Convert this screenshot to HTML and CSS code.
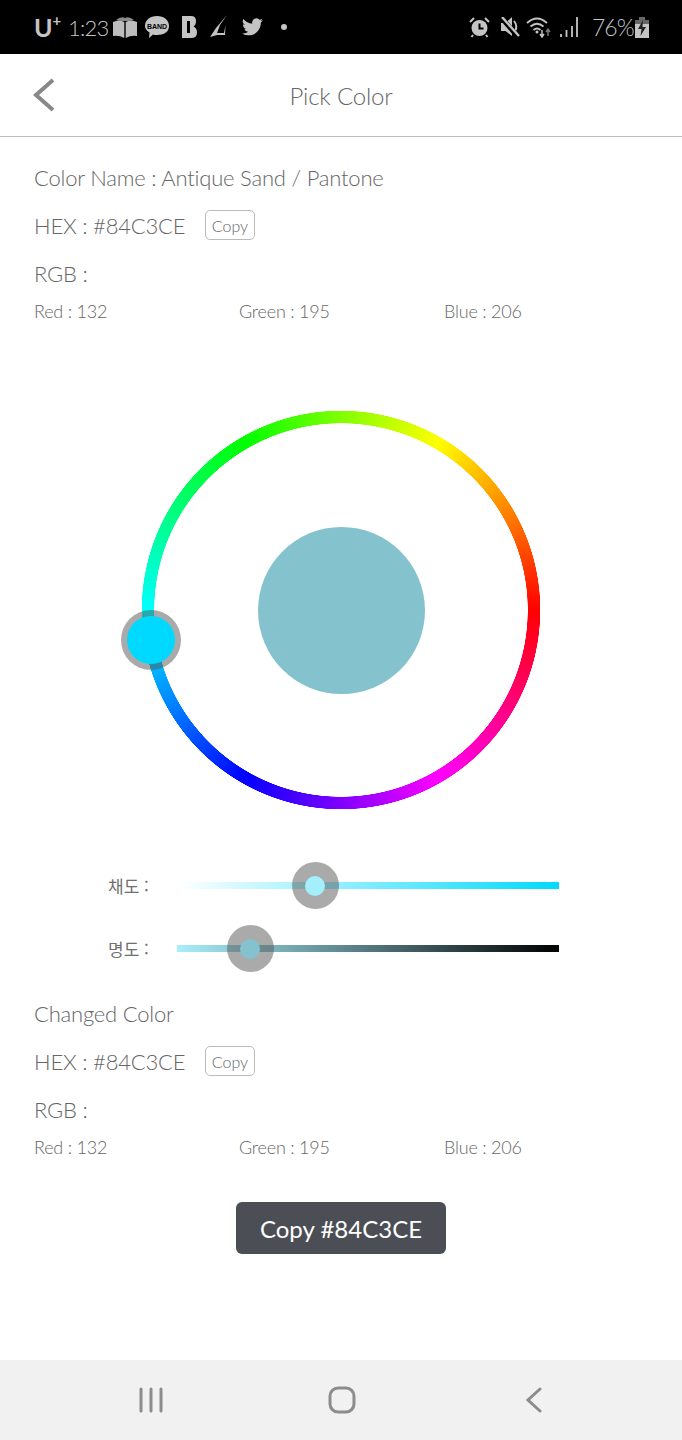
FILE: index.html
```html
<!DOCTYPE html>
<html lang="ko">
<head>
<meta charset="utf-8">
<title>Pick Color</title>
<link rel="stylesheet" href="styles.css">
</head>
<body>
<div class="status">
  <div class="status-left">
    <span class="carrier">U<sup>+</sup></span>
    <span class="clock">1:23</span>
    <svg class="i-book" width="24" height="22" viewBox="0 0 24 22"><path d="M0 6 Q6 3 11.300 6 V22 Q6 19 0 20Z M24 6 Q18 3 12.700 6 V22 Q18 19 24 20Z" fill="#bdbdbd"/><path d="M3 4 Q8 0 12 2 Q16 0 21 4 L17 5 H7Z" fill="#8a8a8a"/></svg>
    <svg class="i-band" width="24" height="24" viewBox="0 0 24 24"><path d="M12 1 C19 1 24 5 24 11 C24 17 19 20 12 20 C10 20 9 20 8 19.500 L4 23 L4.500 17.500 C2 16 0 14 0 11 C0 5 5 1 12 1Z" fill="#c4c4c4"/><text x="12" y="13.500" class="band-t">BAND</text></svg>
    <svg class="i-b" width="16" height="22" viewBox="0 0 16 22"><path d="M1 0 H10 Q15 0 15 5 Q15 9 12.500 10.500 Q16 12 16 16.500 Q16 22 10 22 H1Z" fill="#c4c4c4"/><rect x="6" y="5" width="3" height="12" fill="#000"/></svg>
    <svg class="i-l" width="18" height="24" viewBox="0 0 18 24"><path d="M17 0 L6 13 L0 22 L7 20 H15 L15.500 10 L14 18 H7 L10 10Z" fill="#c4c4c4"/></svg>
    <svg class="i-tw" width="21" height="18" viewBox="0 0 24 20"><path d="M24 2.400a9.800 9.800 0 0 1-2.800.8A4.900 4.900 0 0 0 23.300.500a9.800 9.800 0 0 1-3.100 1.200 4.900 4.900 0 0 0-8.400 4.500A14 14 0 0 1 1.700.900a4.900 4.900 0 0 0 1.500 6.600 4.900 4.900 0 0 1-2.200-.6v.1a4.900 4.900 0 0 0 3.900 4.800 4.900 4.900 0 0 1-2.200.1 4.900 4.900 0 0 0 4.600 3.400A9.900 9.900 0 0 1 0 17.300 14 14 0 0 0 7.500 19.500c9.100 0 14-7.500 14-14v-.6A10 10 0 0 0 24 2.400z" fill="#c4c4c4"/></svg>
    <span class="dot"></span>
  </div>
  <div class="status-right">
    <svg class="i-alarm" width="21" height="21" viewBox="0 0 21 21"><circle cx="10.500" cy="11" r="8" fill="#c4c4c4"/><path d="M10.500 6.500V11.500H14.500" stroke="#000" stroke-width="2" fill="none"/><path d="M1 5 L5 1 M20 5 L16 1 M4 18 L2.500 20 M17 18 L18.500 20" stroke="#c4c4c4" stroke-width="2"/></svg>
    <svg class="i-mute" width="20" height="20" viewBox="0 0 20 20"><path d="M1 6 H5.500 L12 0 V19 L5.500 14 H1Z" fill="#c4c4c4"/><path d="M14 4 Q18 9 15 14" stroke="#c4c4c4" stroke-width="2" fill="none"/><path d="M1 0 L18 20" stroke="#000" stroke-width="5"/><path d="M2 0 L19 19" stroke="#c4c4c4" stroke-width="2.400"/></svg>
    <svg class="i-wifi" width="26" height="22" viewBox="0 0 26 22"><path d="M1 7 Q11 -2 21 7 M4.500 10.500 Q11 5 17.500 10.500 M7.500 14 Q11 11 14.500 14" stroke="#c4c4c4" stroke-width="1.800" fill="none"/><circle cx="11" cy="16" r="1.500" fill="#c4c4c4"/><path d="M16 14v6m-2-2 2 3 2-3" stroke="#c4c4c4" stroke-width="1.500" fill="none"/><path d="M22 20v-6m-2 2 2-3 2 3" stroke="#777" stroke-width="1.500" fill="none"/></svg>
    <svg class="i-sig" width="18" height="20" viewBox="0 0 18 20"><path d="M1 20v-3M6.500 20v-7M12 20v-11M17 20V0" stroke="#c4c4c4" stroke-width="1.800"/></svg>
    <span class="pct">76%</span>
    <svg class="i-bat" width="14" height="21" viewBox="0 0 14 21"><path d="M4 0h6v3H4z" fill="#666"/><path d="M0 3h14v4H0z" fill="#666"/><path d="M0 7h14v14H0z" fill="#c4c4c4"/><path d="M8 3 L3 12 H6.500 L5.500 19 L11 10 H7.500Z" fill="#222"/></svg>
  </div>
</div>

<header class="head">
  <svg class="back" width="22" height="34" viewBox="0 0 22 34"><path d="M20 2 L3 17 L20 32" fill="none" stroke="#888" stroke-width="4"/></svg>
  <h1 class="title">Pick Color</h1>
</header>

<main class="main">
  <section class="info">
    <div class="row big">Color Name : Antique Sand / Pantone</div>
    <div class="row big hexrow"><span>HEX : #84C3CE</span><button class="copy">Copy</button></div>
    <div class="row big">RGB :</div>
    <div class="row small rgb"><span>Red : 132</span><span>Green : 195</span><span>Blue : 206</span></div>
  </section>

  <div class="wheel-wrap">
    <div class="wheel"></div>
    <div class="swatch"></div>
    <div class="wheel-thumb"><span class="wheel-dot"></span></div>
  </div>

  <section class="sliders">
    <div class="slider-row">
      <span class="s-label">채도 :</span>
      <div class="track sat"><div class="thumb thumb-sat"><span class="tdot dot-sat"></span></div></div>
    </div>
    <div class="slider-row">
      <span class="s-label">명도 :</span>
      <div class="track val"><div class="thumb thumb-val"><span class="tdot dot-val"></span></div></div>
    </div>
  </section>

  <section class="info changed">
    <div class="row big">Changed Color</div>
    <div class="row big hexrow"><span>HEX : #84C3CE</span><button class="copy">Copy</button></div>
    <div class="row big">RGB :</div>
    <div class="row small rgb"><span>Red : 132</span><span>Green : 195</span><span>Blue : 206</span></div>
  </section>

  <div class="cta-wrap"><button class="cta">Copy #84C3CE</button></div>
</main>

<nav class="nav">
  <svg width="26" height="26" viewBox="0 0 26 26"><path d="M3 2v22M13 2v22M23 2v22" stroke="#8c8c8c" stroke-width="3" stroke-linecap="round"/></svg>
  <svg width="28" height="28" viewBox="0 0 28 28"><rect x="2" y="2" width="24" height="24" rx="8" fill="none" stroke="#8c8c8c" stroke-width="3"/></svg>
  <svg width="18" height="26" viewBox="0 0 18 26"><path d="M15 2 L3 13 L15 24" fill="none" stroke="#8c8c8c" stroke-width="3" stroke-linecap="round"/></svg>
</nav>
</body>
</html>
```
FILE: styles.css
```css
* { box-sizing: border-box; }
html, body { margin: 0; padding: 0; }
body {
  width: 682px;
  height: 1440px;
  background: #fff;
  font-family: "Lato", "Noto Sans CJK KR", sans-serif;
  font-weight: 300;
  color: #666;
  display: flex;
  flex-direction: column;
  overflow: hidden;
}
.status {
  height: 54px;
  background: #000;
  color: #c4c4c4;
  display: flex;
  justify-content: space-between;
  align-items: center;
  padding: 0 33px 0 34px;
  flex: none;
}
.status-left, .status-right { display: flex; align-items: center; }
.carrier { font-size: 25px; font-weight: 700; line-height: 1; display: flex; width: 25px; }
.carrier sup { font-size: 15px; line-height: 1; margin-top: -2px; vertical-align: baseline; }
.clock { font-size: 22px; margin-left: 9px; width: 37px; letter-spacing: -.8px; }
.i-book { margin-left: 8px; }
.i-band { margin-left: 8px; }
.i-b { margin-left: 12px; }
.i-l { margin-left: 13px; }
.i-tw { margin-left: 14px; }
.dot { width: 6px; height: 6px; border-radius: 50%; background: #c4c4c4; margin-left: 18px; }
.band-t { font: 700 7px "Liberation Sans", sans-serif; text-anchor: middle; fill: #000; }
.i-mute { margin-left: 10px; }
.i-wifi { margin-left: 6px; }
.i-sig { margin-left: 8px; }
.pct { font-size: 23px; margin-left: 14px; letter-spacing: -1px; width: 43px; white-space: nowrap; }

.head {
  height: 83px;
  border-bottom: 1px solid #bdbdbd;
  display: flex;
  align-items: center;
  justify-content: center;
  position: relative;
  flex: none;
}
.back { position: absolute; left: 33px; top: 24px; }
.title { margin: 0; font-size: 24px; font-weight: 300; color: #666; letter-spacing: -.2px; }

.main { flex: 1; padding: 0 34px; display: flex; flex-direction: column; }
.info { padding-top: 25px; }
.row { height: 30px; display: flex; align-items: center; }
.big { font-size: 22px; letter-spacing: -.2px; margin-bottom: 18px; }
.small { font-size: 18px; letter-spacing: -.2px; }
.rgb { display: grid; grid-template-columns: 205px 205px 1fr; margin-top: -10px; }
.hexrow span { width: 171px; white-space: nowrap; }
.copy {
  width: 50px;
  height: 30px;
  padding: 0;
  background: #fff;
  border: 1px solid #bbb;
  border-radius: 5px;
  font: 300 16px "Lato", sans-serif;
  color: #666;
}

.wheel-wrap {
  position: relative;
  width: 400px;
  height: 400px;
  margin: 84px 0 0 107px;
  flex: none;
}
.wheel {
  width: 400px;
  height: 400px;
  border-radius: 50%;
  background: conic-gradient(from 90deg, #f00, #f0f, #00f, #0ff, #0f0, #ff0, #f00);
  -webkit-mask: radial-gradient(circle, transparent 186.500px, #000 187px, #000 199px, transparent 199.500px);
  mask: radial-gradient(circle, transparent 186.500px, #000 187px, #000 199px, transparent 199.500px);
}
.swatch {
  position: absolute;
  left: 116.500px;
  top: 116.500px;
  width: 167px;
  height: 167px;
  border-radius: 50%;
  background: #84c3ce;
}
.wheel-thumb {
  position: absolute;
  left: -20px;
  top: 200px;
  width: 60px;
  height: 60px;
  border-radius: 50%;
  background: rgba(85, 85, 85, .5);
  display: flex;
  align-items: center;
  justify-content: center;
}
.wheel-dot { width: 48px; height: 48px; border-radius: 50%; background: #00d9ff; }

.sliders { margin-top: 60px; display: flex; flex-direction: column; gap: 32px; }
.slider-row { height: 31px; display: flex; align-items: center; }
.s-label {
  width: 143px;
  padding-left: 74px;
  font: 400 17px "Noto Sans CJK KR", sans-serif;
  color: #707070;
  white-space: nowrap;
}
.track { position: relative; width: 382px; height: 7px; }
.sat { background: linear-gradient(90deg, #fff, #00d9ff); }
.val { background: linear-gradient(90deg, #a8effc, #000); }
.thumb {
  position: absolute;
  top: 50%;
  width: 47px;
  height: 47px;
  margin: -23.500px 0 0 -23.500px;
  border-radius: 50%;
  background: rgba(85, 85, 85, .5);
  display: flex;
  align-items: center;
  justify-content: center;
}
.thumb-sat { left: 138px; }
.thumb-val { left: 73px; }
.tdot { width: 20px; height: 20px; border-radius: 50%; }
.dot-sat { background: #a3effc; }
.dot-val { background: #84c3ce; }

.changed { padding-top: 34px; }
.cta-wrap { display: flex; justify-content: center; margin-top: 40px; }
.cta {
  width: 210px;
  height: 52px;
  border: 0;
  border-radius: 6px;
  background: #4b4e55;
  color: #fff;
  font: 400 24px "Lato", sans-serif;
}

.nav {
  height: 80px;
  background: #f1f1f1;
  flex: none;
  display: grid;
  grid-template-columns: 190px 197px 1fr;
  align-items: center;
  justify-items: start;
  padding-left: 138px;
}
```
